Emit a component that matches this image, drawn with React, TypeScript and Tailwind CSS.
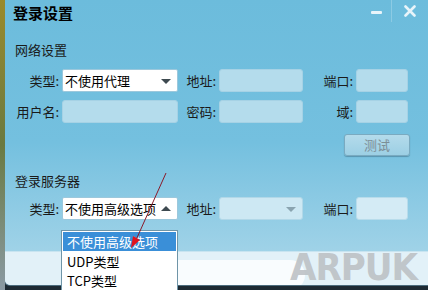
import React from "react";

const font = { fontFamily: '"Microsoft YaHei", "Noto Sans CJK SC", "Noto Sans", sans-serif' };

function Label({ text, w }: { text: string; w: string }) {
  return <span className={`${w} shrink-0 text-right pr-[3px] text-[13px] text-[#1a1a1a] leading-none`}>{text}</span>;
}

function Field({ w }: { w: string }) {
  return <div className={`${w} h-[23px] shrink-0 rounded-[3px] bg-[#b4dcec] border border-[#a6d2e5]`} />;
}

export default function App() {
  return (
    <div className="w-[428px] h-[290px] relative overflow-hidden bg-[#1d2a33]" style={font}>
      {/* desktop strip at the left */}
      <div className="absolute left-0 top-0 w-[5px] h-[290px] bg-gradient-to-b from-[#9a8a2a] via-[#6a7a40] to-[#8a9aa4]" />

      {/* window */}
      <div className="ml-[4px] w-[424px] h-[286px] border-l border-b border-[#4b6b7c] rounded-bl-[6px] overflow-hidden flex flex-col bg-gradient-to-b from-[#6cbcdc] via-[#74c0df] to-[#acd8ea]">
        {/* title bar */}
        <div className="h-[28px] flex items-start">
          <span className="ml-[8px] mt-[4px] text-[15px] font-bold text-black leading-[18px]">登录设置</span>
          <div className="ml-auto flex h-[22px]">
            <div className="w-[30px] flex items-center justify-center border-r border-[#8ccbe4]">
              <span className="w-[11px] h-[3px] bg-[#e8f4fa] rounded-[1px] mt-[2px]" />
            </div>
            <div className="w-[36px] flex items-center justify-center">
              <svg width="12" height="12" viewBox="0 0 12 12">
                <path d="M1.5 1.5 L10.5 10.5 M10.5 1.5 L1.5 10.5" stroke="#e8f4fa" strokeWidth="2.6" strokeLinecap="round" />
              </svg>
            </div>
          </div>
        </div>

        {/* 网络设置 */}
        <div className="pl-[10px] mt-[14px] text-[13px] text-[#1a1a1a] leading-[16px]">网络设置</div>

        <div className="mt-[11px] flex items-center pl-[10px]">
          <Label text="类型:" w="w-[47px]" />
          <div className="w-[116px] h-[23px] shrink-0 bg-white border border-[#9cc8dc] rounded-[2px] relative flex items-center pl-[2px] text-[13px] text-black">
            不使用代理
            <span className="absolute right-[6px] top-[9px] w-0 h-0 border-l-[5px] border-r-[5px] border-t-[5px] border-l-transparent border-r-transparent border-t-[#3e4a50]" />
          </div>
          <Label text="地址:" w="w-[41px]" />
          <Field w="w-[84px]" />
          <Label text="端口:" w="w-[53px]" />
          <Field w="w-[52px]" />
        </div>

        <div className="mt-[8px] flex items-center pl-[10px]">
          <Label text="用户名:" w="w-[47px]" />
          <Field w="w-[116px]" />
          <Label text="密码:" w="w-[41px]" />
          <Field w="w-[84px]" />
          <Label text="域:" w="w-[53px]" />
          <Field w="w-[52px]" />
        </div>

        <div className="mt-[11px] flex justify-end pr-[18px]">
          <div className="w-[66px] h-[22px] rounded-[3px] border border-[#7aaac0] bg-gradient-to-b from-[#b4dbeb] to-[#9ccfe4] flex items-center justify-center text-[13px] text-[#7c8e96] shadow-[0_1px_1px_rgba(40,80,100,0.4)]">
            测试
          </div>
        </div>

        {/* 登录服务器 */}
        <div className="pl-[10px] mt-[17px] text-[13px] text-[#1a1a1a] leading-[16px]">登录服务器</div>

        <div className="mt-[8px] flex items-center pl-[10px]">
          <Label text="类型:" w="w-[47px]" />
          <div className="w-[116px] h-[23px] shrink-0 bg-white border border-[#9cc8dc] rounded-[2px] relative flex items-center pl-[2px] text-[13px] text-black">
            不使用高级选项
            <span className="absolute right-[6px] top-[8px] w-0 h-0 border-l-[5px] border-r-[5px] border-b-[5px] border-l-transparent border-r-transparent border-b-[#3e4a50]" />
          </div>
          <Label text="地址:" w="w-[41px]" />
          <div className="w-[84px] h-[23px] shrink-0 rounded-[3px] relative bg-[#cde8f3] border border-[#b2d8e8]">
            <span className="absolute right-[6px] top-[9px] w-0 h-0 border-l-[5px] border-r-[5px] border-t-[5px] border-l-transparent border-r-transparent border-t-[#8aa4b0]" />
          </div>
          <Label text="端口:" w="w-[53px]" />
          <div className="w-[52px] h-[23px] shrink-0 rounded-[3px] bg-[#d4ebf5] border border-[#b8dceb]" />
        </div>

        {/* bottom bar */}
        <div className="mt-auto h-[34px] bg-[#e2f1f8] border-t border-[#c8e4f0] relative overflow-hidden">
          <div className="absolute left-[150px] top-[8px] w-[150px] h-[30px] rounded-full bg-white/80" />
        </div>
      </div>

      {/* watermark */}
      <span
        className="absolute left-[290px] top-[248px] text-[38px] font-bold tracking-[-1px] text-[#bcc0c4]/90 leading-[38px]"
        style={{ fontFamily: '"DejaVu Sans Condensed", "DejaVu Sans", sans-serif' }}
      >
        ARPUK
      </span>

      {/* open dropdown list */}
      <div className="absolute left-[61px] top-[230px] w-[117px] h-[62px] bg-white border border-[#6f95a8] pt-[1px]">
        <div className="mx-[1px] h-[19px] bg-[#3a8fd8] text-white text-[13px] leading-[19px] pl-[4px]">不使用高级选项</div>
        <div className="h-[19px] text-[13px] text-black leading-[19px] pl-[5px] mt-[1px]">UDP类型</div>
        <div className="h-[19px] text-[13px] text-black leading-[19px] pl-[5px]">TCP类型</div>
      </div>

      {/* annotation arrow */}
      <svg className="absolute left-0 top-0" width="428" height="290" viewBox="0 0 428 290">
        <line x1="166" y1="173" x2="136" y2="240" stroke="#8a1a2a" strokeWidth="1" />
        <path d="M131 248 L133 236 L140 240 Z" fill="#e0141e" />
      </svg>
    </div>
  );
}
